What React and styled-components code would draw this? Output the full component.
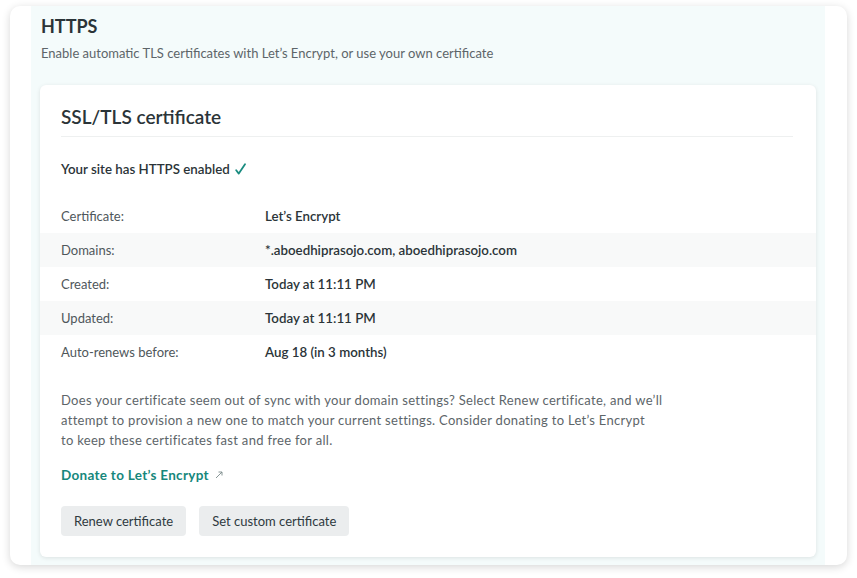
import React from 'react'
import styled, { createGlobalStyle } from 'styled-components'

const GlobalStyle = createGlobalStyle`
  html, body {
    margin: 0;
    padding: 0;
    background: #ffffff;
  }
  body {
    font-family: Lato, "Open Sans", "Liberation Sans", sans-serif;
    color: #2f3a3f;
  }
`

const Page = styled.div`
  padding: 6px 10px 14px 10px;
`

const Shell = styled.div`
  background: #fff;
  border-radius: 10px;
  box-shadow: 0 2px 8px rgba(0, 0, 0, 0.16);
  padding: 0 22px 0 21px;
`

const Section = styled.section`
  background: #f4fbfb;
  padding: 8px 9px 8px 9px;
`

const SectionHead = styled.header`
  padding: 0 1px;
  margin-bottom: 22px;
`

const SectionTitle = styled.h2`
  margin: 0;
  font-size: 18px;
  line-height: 24px;
  font-weight: 700;
  color: #2b3438;
`

const SectionSub = styled.p`
  margin: 5px 0 0;
  font-size: 13px;
  line-height: 20px;
  color: #5d6569;
`

const Card = styled.div`
  background: #fff;
  border-radius: 6px;
  box-shadow: 0 1px 4px rgba(0, 0, 0, 0.1);
  padding: 20px 0 21px;
`

const CardTitle = styled.h3`
  margin: 0 23px 0 21px;
  padding-bottom: 7px;
  border-bottom: 1px solid #eef0f0;
  font-size: 19px;
  line-height: 24px;
  font-weight: 600;
  color: #2b3438;
`

const Status = styled.p`
  display: flex;
  align-items: center;
  gap: 5px;
  margin: 22px 21px 20px;
  font-size: 13.3px;
  line-height: 20px;
  font-weight: 600;
  color: #2b3438;
`

const Table = styled.div`
  display: flex;
  flex-direction: column;
`

const Row = styled.div`
  display: grid;
  grid-template-columns: 204px 1fr;
  align-items: center;
  height: 34px;
  padding-left: 21px;
  background: ${p => (p.$striped ? '#f8f9f9' : 'transparent')};
  font-size: 13px;
`

const Label = styled.span`
  color: #4f575b;
`

const Value = styled.span`
  color: #2b3438;
  font-weight: 600;
  font-size: 13.3px;
`

const Body = styled.div`
  padding: 0 21px;
`

const Note = styled.p`
  margin: 21px 0 0;
  font-size: 13px;
  letter-spacing: 0.3px;
  line-height: 20px;
  color: #5d6569;
  white-space: nowrap;
`

const Link = styled.a`
  display: inline-flex;
  align-items: center;
  gap: 6px;
  margin-top: 15px;
  font-size: 13.5px;
  letter-spacing: 0.3px;
  line-height: 20px;
  font-weight: 700;
  color: #16877c;
  text-decoration: none;
`

const Actions = styled.div`
  display: flex;
  gap: 13px;
  margin-top: 21px;
`

const Button = styled.button`
  height: 30px;
  padding: 0 13px;
  border: none;
  border-radius: 4px;
  background: #ebedee;
  font-family: inherit;
  font-size: 13px;
  color: #2f3a3f;
  cursor: pointer;
`

const rows = [
  { label: 'Certificate:', value: 'Let’s Encrypt' },
  { label: 'Domains:', value: '*.aboedhiprasojo.com, aboedhiprasojo.com' },
  { label: 'Created:', value: 'Today at 11:11 PM' },
  { label: 'Updated:', value: 'Today at 11:11 PM' },
  { label: 'Auto-renews before:', value: 'Aug 18 (in 3 months)' },
]

const CheckMark = () => (
  <svg width="11" height="12" viewBox="0 0 11 12" fill="none" stroke="#1a8c80" strokeWidth="1.8" strokeLinecap="round" strokeLinejoin="round">
    <path d="M1.2 7.2L3.8 10.6L10 1.2" />
  </svg>
)

const ExternalArrow = () => (
  <svg width="8" height="8" viewBox="0 0 8 8" fill="none" stroke="#7a8a8a" strokeWidth="0.9">
    <path d="M1 7L7 1M3.5 1H7V4.5" />
  </svg>
)

export default function App() {
  return (
    <Page>
      <GlobalStyle />
      <Shell>
        <Section>
          <SectionHead>
            <SectionTitle>HTTPS</SectionTitle>
            <SectionSub>
              Enable automatic TLS certificates with Let’s Encrypt, or use your own certificate
            </SectionSub>
          </SectionHead>
          <Card>
            <CardTitle>SSL/TLS certificate</CardTitle>
            <Status>
              Your site has HTTPS enabled <CheckMark />
            </Status>
            <Table>
              {rows.map((r, i) => (
                <Row key={r.label} $striped={i % 2 === 1}>
                  <Label>{r.label}</Label>
                  <Value>{r.value}</Value>
                </Row>
              ))}
            </Table>
            <Body>
              <Note>
                Does your certificate seem out of sync with your domain settings? Select Renew certificate, and we’ll
                <br />
                attempt to provision a new one to match your current settings. Consider donating to Let’s Encrypt
                <br />
                to keep these certificates fast and free for all.
              </Note>
              <Link href="#">
                Donate to Let’s Encrypt <ExternalArrow />
              </Link>
              <Actions>
                <Button>Renew certificate</Button>
                <Button>Set custom certificate</Button>
              </Actions>
            </Body>
          </Card>
        </Section>
      </Shell>
    </Page>
  )
}
